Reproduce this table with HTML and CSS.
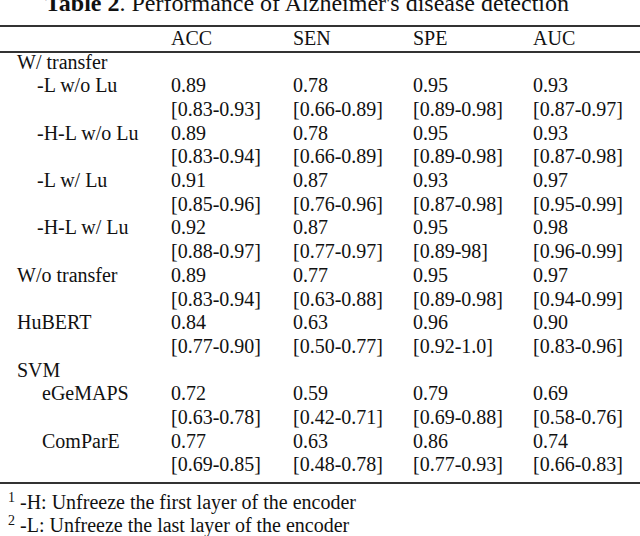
FILE: index.html
```html
<!DOCTYPE html>
<html>
<head>
<meta charset="utf-8">
<link rel="stylesheet" href="styles.css">
</head>
<body>
<div class="page">
  <div class="title"><b>Table 2</b>. Performance of Alzheimer's disease detection</div>
  <table class="results">
    <colgroup>
      <col class="c-label"><col class="c-acc"><col class="c-sen"><col class="c-spe"><col class="c-auc">
    </colgroup>
    <thead>
      <tr><th class="label"></th><th>ACC</th><th>SEN</th><th>SPE</th><th>AUC</th></tr>
    </thead>
    <tbody>
      <tr class="first"><td class="label"><div class="lift">W/ transfer</div></td><td></td><td></td><td></td><td></td></tr>
      <tr><td class="label sub">-L w/o Lu</td><td>0.89<br>[0.83-0.93]</td><td>0.78<br>[0.66-0.89]</td><td>0.95<br>[0.89-0.98]</td><td>0.93<br>[0.87-0.97]</td></tr>
      <tr><td class="label sub">-H-L w/o Lu</td><td>0.89<br>[0.83-0.94]</td><td>0.78<br>[0.66-0.89]</td><td>0.95<br>[0.89-0.98]</td><td>0.93<br>[0.87-0.98]</td></tr>
      <tr><td class="label sub">-L w/ Lu</td><td>0.91<br>[0.85-0.96]</td><td>0.87<br>[0.76-0.96]</td><td>0.93<br>[0.87-0.98]</td><td>0.97<br>[0.95-0.99]</td></tr>
      <tr><td class="label sub">-H-L w/ Lu</td><td>0.92<br>[0.88-0.97]</td><td>0.87<br>[0.77-0.97]</td><td>0.95<br>[0.89-98]</td><td>0.98<br>[0.96-0.99]</td></tr>
      <tr><td class="label">W/o transfer</td><td>0.89<br>[0.83-0.94]</td><td>0.77<br>[0.63-0.88]</td><td>0.95<br>[0.89-0.98]</td><td>0.97<br>[0.94-0.99]</td></tr>
      <tr><td class="label">HuBERT</td><td>0.84<br>[0.77-0.90]</td><td>0.63<br>[0.50-0.77]</td><td>0.96<br>[0.92-1.0]</td><td>0.90<br>[0.83-0.96]</td></tr>
      <tr><td class="label">SVM</td><td></td><td></td><td></td><td></td></tr>
      <tr><td class="label sub2">eGeMAPS</td><td>0.72<br>[0.63-0.78]</td><td>0.59<br>[0.42-0.71]</td><td>0.79<br>[0.69-0.88]</td><td>0.69<br>[0.58-0.76]</td></tr>
      <tr class="last"><td class="label sub2">ComParE</td><td>0.77<br>[0.69-0.85]</td><td>0.63<br>[0.48-0.78]</td><td>0.86<br>[0.77-0.93]</td><td>0.74<br>[0.66-0.83]</td></tr>
    </tbody>
  </table>
  <div class="notes">
    <div class="note"><sup>1</sup>-H: Unfreeze the first layer of the encoder</div>
    <div class="note"><sup>2</sup>-L: Unfreeze the last layer of the encoder</div>
  </div>
</div>
</body>
</html>
```

FILE: styles.css
```css
html, body {
  margin: 0;
  padding: 0;
  background: #fff;
}

.page {
  width: 640px;
  height: 536px;
  overflow: hidden;
  font-family: "Liberation Serif", "Times New Roman", serif;
  color: #111;
}

.title {
  font-size: 24px;
  line-height: 24px;
  margin-top: -9px;
  padding-left: 45px;
  height: 24px;
  margin-bottom: 10px;
  white-space: nowrap;
}

.title b {
  font-weight: bold;
}

.results {
  width: 640px;
  border-collapse: collapse;
  table-layout: fixed;
  font-size: 20px;
  line-height: 23.7px;
}

.results thead th {
  line-height: 23.5px;
}

.c-label { width: 171px; }
.c-acc { width: 122px; }
.c-sen { width: 120px; }
.c-spe { width: 120px; }
.c-auc { width: 107px; }

.results th,
.results td {
  padding: 0;
  text-align: left;
  vertical-align: top;
  font-weight: normal;
  white-space: nowrap;
}

.results thead tr {
  border-top: 2px solid #333;
  border-bottom: 2px solid #333;
}

.results th.label,
.results td.label {
  padding-left: 17px;
}

.lift {
  margin-top: -2px;
}

.results td.sub {
  padding-left: 37px;
}

.results td.sub2 {
  padding-left: 42px;
}

.results tr.last {
  border-bottom: 2px solid #333;
}

.results tr.last td {
  padding-bottom: 5px;
}

.notes {
  font-size: 20px;
  line-height: 22.5px;
  padding-top: 7px;
}

.note {
  padding-left: 8px;
  white-space: nowrap;
}

.note sup {
  font-size: 14px;
  line-height: 0;
  vertical-align: 7px;
  margin-right: 5px;
}
```
